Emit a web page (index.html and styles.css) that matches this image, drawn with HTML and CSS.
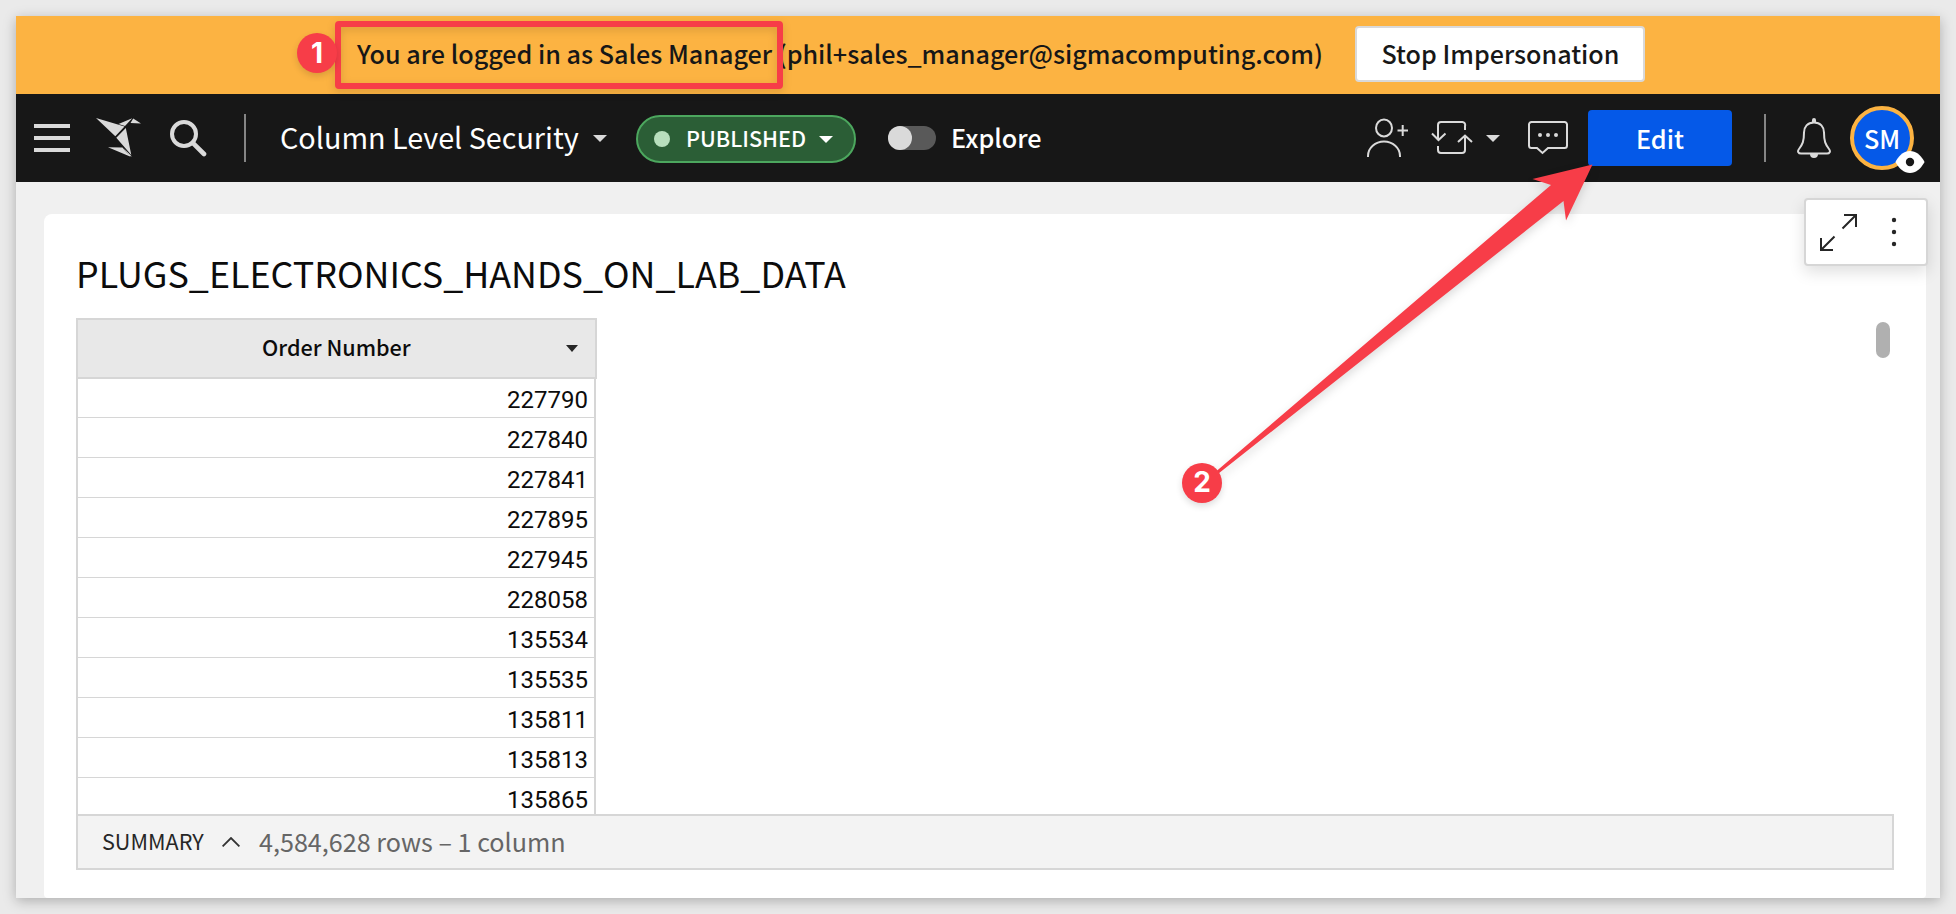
FILE: index.html
```html
<!DOCTYPE html>
<html lang="en">
<head>
<meta charset="utf-8">
<title>Column Level Security</title>
<link rel="stylesheet" href="styles.css">
</head>
<body>
<div class="window">
  <div class="banner">
    <span class="banner-text">You are logged in as Sales Manager (phil+sales_manager@sigmacomputing.com)</span>
    <button class="stop"><span>Stop Impersonation</span></button>
  </div>
  <header class="nav">
    <div class="nav-left">
      <svg class="menu" width="36" height="28" viewBox="0 0 36 28" fill="#dadada"><path d="M0 0h36v4H0zM0 12h36v4H0zM0 24h36v4H0z"/></svg>
      <svg class="bird" width="46" height="40" viewBox="0 0 46 40" fill="#dadada"><path d="M0 0 28.500 8.500 19.300 18.200zM22.500 6 36.200.3 29 8zM37.200.5 45 5.500 34.500 5zM29.800 10 35.300 37 20.300 19.800zM12 29.200 26.500 29.500 34 38.500zM27.500 30 35.800 38.600 33.500 38z"/></svg>
      <svg class="search" width="37" height="37" viewBox="0 0 37 37" fill="none" stroke="#dadada" stroke-width="4"><circle cx="14" cy="14" r="12"/><path d="M22.800 22.800 34 34" stroke-width="4.600" stroke-linecap="round"/></svg>
      <i class="rule"></i>
      <span class="doc">Column Level Security</span>
      <svg class="doc-caret" width="14" height="7" viewBox="0 0 14 7" fill="#dadada"><path d="M0 0h14L7 7z"/></svg>
      <div class="pill"><i class="dot"></i><span class="pill-text">PUBLISHED</span><svg width="14" height="7" viewBox="0 0 14 7" fill="#fff"><path d="M0 0h14L7 7z"/></svg></div>
      <div class="toggle"><i></i></div>
      <span class="explore">Explore</span>
    </div>
    <div class="nav-right">
      <svg class="share" width="42" height="40" viewBox="0 0 42 40" fill="none" stroke="#dadada" stroke-width="2"><ellipse cx="17" cy="10" rx="8" ry="8.400"/><path d="M1 39v-1a16 14.500 0 0 1 32 0v1M30.500 12.400h10.500M35.700 7v11"/></svg>
      <svg class="sync" width="42" height="34" viewBox="0 0 42 34" fill="none" stroke="#dadada" stroke-width="2"><path d="M34 9V5a3 3 0 0 0-3-4H10a3 3 0 0 0-3 3v14M1 12.500 7.500 19l7-6.500M7 25v4a3 3 0 0 0 3 3h21a3 3 0 0 0 3-3V15M27 21l7-6.500 7 6.500"/></svg>
      <svg class="sync-caret" width="14" height="7" viewBox="0 0 14 7" fill="#dadada"><path d="M0 0h14L7 7z"/></svg>
      <svg class="comment" width="40" height="35" viewBox="0 0 40 35" fill="none" stroke="#dadada" stroke-width="2"><path d="M3.500 1h33A2.500 2.500 0 0 1 39 3.500v21a2.500 2.500 0 0 1-2.500 2.500H20l-5.500 5L9 27H3.500A2.500 2.500 0 0 1 1 24.500v-21A2.500 2.500 0 0 1 3.500 1z"/><g fill="#dadada" stroke="none"><circle cx="12" cy="14" r="2"/><circle cx="20" cy="14" r="2"/><circle cx="28" cy="14" r="2"/></g></svg>
      <button class="edit">Edit</button>
      <i class="rule"></i>
      <svg class="bell" width="34" height="40" viewBox="0 0 34 40" fill="none" stroke="#dadada" stroke-width="2"><path d="M17 4.500c6.500 0 10 4.500 10 10 0 9 1.500 12 5 16.500 2 2.500.5 4.500-2 4.500H4c-2.500 0-4-2-2-4.500 3.500-4.500 5-7.500 5-16.500 0-5.500 3.500-10 10-10z"/><path d="M17 0a2 2 0 0 1 2 2v3h-4V2a2 2 0 0 1 2-2zM13 36h8a4 4 0 0 1-8 0z" fill="#dadada" stroke="none"/></svg>
      <div class="avatar">SM
        <svg class="eye" width="30" height="24" viewBox="0 0 30 24"><path d="M.8 11.200C5 4.500 9 1 15 1s10 3.500 14.200 10.200q.5.800 0 1.600C25 19.500 21 23 15 23S5 19.500.8 12.800q-.5-.8 0-1.600z" fill="#fff"/><circle cx="15" cy="12" r="4.200" fill="#171717"/></svg>
      </div>
    </div>
  </header>
  <main class="canvas">
    <div class="tools">
      <svg class="expand" width="38" height="38" viewBox="0 0 38 38" fill="none" stroke="#262626" stroke-width="2"><path d="M24 1h12v12M36 1 22.500 14.500M1 24v12h12M1 36 14.500 22.500"/></svg>
      <svg width="6" height="30" viewBox="0 0 6 30" fill="#262626"><circle cx="3" cy="3" r="2.200"/><circle cx="3" cy="15" r="2.200"/><circle cx="3" cy="27" r="2.200"/></svg>
    </div>
    <section class="card">
      <h1 class="title">PLUGS_ELECTRONICS_HANDS_ON_LAB_DATA</h1>
      <div class="grid">
        <div class="rows">
          <div class="head"><span>Order Number</span><svg width="12" height="7" viewBox="0 0 12 7" fill="#262626"><path d="M0 0h12L6 7z"/></svg></div>
          <div class="cell">227790</div>
          <div class="cell">227840</div>
          <div class="cell">227841</div>
          <div class="cell">227895</div>
          <div class="cell">227945</div>
          <div class="cell">228058</div>
          <div class="cell">135534</div>
          <div class="cell">135535</div>
          <div class="cell">135811</div>
          <div class="cell">135813</div>
          <div class="cell">135865</div>
        </div>
        <i class="thumb"></i>
      </div>
      <div class="summary"><span class="label">SUMMARY</span><svg width="18" height="10" viewBox="0 0 18 10" fill="none" stroke="#333" stroke-width="1.800"><path d="M.6 9.400 9 1l8.400 8.400"/></svg><span class="count">4,584,628 rows – 1 column</span></div>
    </section>
  </main>
</div>
<div class="frame"></div>
<svg class="arrow" width="1956" height="914" viewBox="0 0 1956 914" fill="#f73d48"><path d="M1216 471.500 1551 185 1532.500 179 1592.500 164.500 1566 220.500 1563.500 201 1218.500 473.500z"/></svg>
<div class="marker one">1</div>
<div class="marker two">2</div>
</body>
</html>
```
FILE: styles.css
```css
* { box-sizing: border-box; }
body {
  margin: 0; width: 1956px; height: 914px; padding: 16px; overflow: hidden;
  background: #eaeaea; color: #171717; position: relative;
  font-family: "Noto Sans CJK SC", "Noto Sans", sans-serif;
}
svg { display: block; flex: none; }
button { font: inherit; padding: 0; margin: 0; flex: none; }
span { white-space: nowrap; flex: none; }
.window { width: 1924px; height: 882px; display: flex; flex-direction: column; box-shadow: 0 3px 12px rgba(0,0,0,.26); background: #f0f0f0; }
.banner { height: 78px; flex: none; background: #fcb342; display: flex; align-items: center; padding-left: 341px; font-size: 25.150px; font-weight: 500; line-height: 36px; }
.banner-text { width: 998px; padding-bottom: 4px; }
.stop { width: 290px; height: 56px; margin-top: -2px; padding: 0 0 2px 1px; background: #fff; border: 2px solid #d9d9d9; border-radius: 4px; color: #171717; font-size: 25.100px; font-weight: 500; line-height: 36px; }
.nav { height: 88px; flex: none; background: #171717; color: #fff; display: flex; justify-content: space-between; align-items: center; }
.nav-left, .nav-right { display: flex; align-items: center; }
.nav-left { padding-left: 18px; }
.nav-right { padding-right: 26px; }
.bird { margin-left: 26px; }
.search { margin-left: 28px; }
.rule { width: 2px; height: 48px; background: #858585; flex: none; }
.nav-left .rule { margin-left: 37px; }
.doc { margin-left: 34px; width: 313px; padding-bottom: 2px; font-size: 28.750px; line-height: 40px; }
.pill { margin: 2px 0 0 29px; width: 220px; height: 48px; border-radius: 24px; border: 2px solid #4ca75e; background: #2b5e36; display: flex; align-items: center; padding-left: 16px; }
.dot { width: 16px; height: 16px; border-radius: 50%; background: #b8dfbd; flex: none; }
.pill-text { margin-left: 16px; width: 133px; padding-bottom: 2px; font-size: 21.600px; font-weight: 500; line-height: 30px; }
.toggle { margin-left: 32px; width: 48px; height: 24px; border-radius: 12px; background: #595959; }
.toggle i { display: block; width: 24px; height: 24px; border-radius: 50%; background: #dadada; }
.explore { margin-left: 15px; padding-bottom: 2px; font-size: 25.200px; font-weight: 500; line-height: 36px; }
.sync { margin-left: 22px; }
.sync-caret { margin-left: 13px; }
.comment { margin-left: 28px; }
.edit { margin-left: 20px; width: 144px; height: 56px; border: 0; border-radius: 4px; background: #0559e8; color: #fff; font-size: 25.200px; font-weight: 500; line-height: 36px; padding-bottom: 1px; }
.nav-right .rule { margin-left: 32px; }
.bell { margin-left: 31px; }
.avatar { margin-left: 19px; width: 64px; height: 64px; border-radius: 50%; border: 4px solid #fcb342; background: #0559e8; position: relative; display: flex; align-items: center; justify-content: center; font-size: 25.200px; font-weight: 500; padding-bottom: 1px; }
.eye { position: absolute; left: 41px; top: 40px; }
.canvas { flex: 1; min-height: 0; padding: 32px 14px 0 28px; position: relative; display: flex; }
.card { flex: 1; background: #fff; border-radius: 8px 8px 4px 4px; padding: 31px 32px 0; display: flex; flex-direction: column; }
.tools { position: absolute; left: 1788px; top: 16px; width: 124px; height: 68px; background: #fff; border: 2px solid #d6d6d6; border-radius: 4px; box-shadow: 0 6px 16px rgba(0,0,0,.13); display: flex; align-items: center; padding-left: 14px; gap: 33px; }
.expand { margin-top: 2px; }
.title { margin: 0; height: 54px; font-size: 35.830px; line-height: 54px; font-weight: 400; white-space: nowrap; color: #0c0c0c; }
.grid { margin-top: 19px; height: 496px; overflow: hidden; display: flex; justify-content: space-between; align-items: flex-start; }
.rows { width: 521px; }
.head { height: 61px; border: 2px solid #d6d6d6; background: #e8e8e8; display: flex; align-items: center; justify-content: space-between; padding: 0 17px 0 184px; font-size: 21.600px; font-weight: 500; line-height: 30px; color: #0c0c0c; }
.head span { padding-bottom: 3px; }
.cell { width: 520px; height: 40px; border: 2px solid #d6d6d6; border-top: 0; border-bottom-width: 1px; font: 24px/44px Roboto, sans-serif; text-align: right; padding-right: 6px; color: #0c0c0c; }
.head + .cell { height: 39px; line-height: 43px; }
.thumb { width: 14px; height: 36px; border-radius: 7px; background: #b0b0b0; margin: 4px 4px 0 0; }
.summary { height: 56px; border: 2px solid #d6d6d6; background: #f3f3f3; display: flex; align-items: center; padding-left: 24px; }
.label { width: 120px; padding-bottom: 2px; font-size: 21.600px; line-height: 30px; color: #262626; }
.count { margin-left: 19px; padding-bottom: 2px; font-size: 25.150px; line-height: 36px; color: #666; }
.frame { position: absolute; left: 335px; top: 21px; width: 448px; height: 68px; border: 6px solid #f73d48; border-radius: 4px; filter: drop-shadow(0 3px 4px rgba(0,0,0,.14)); }
.arrow { position: absolute; left: 0; top: 0; filter: drop-shadow(0 4px 5px rgba(0,0,0,.14)); }
.marker { position: absolute; width: 40px; height: 40px; border-radius: 50%; background: #f73d48; color: #fff; font: 700 28px/39px Inter, sans-serif; text-align: center; box-shadow: 0 3px 7px rgba(0,0,0,.14); }
.one { left: 297px; top: 33px; line-height: 41px; }
.two { left: 1182px; top: 463px; }
```
